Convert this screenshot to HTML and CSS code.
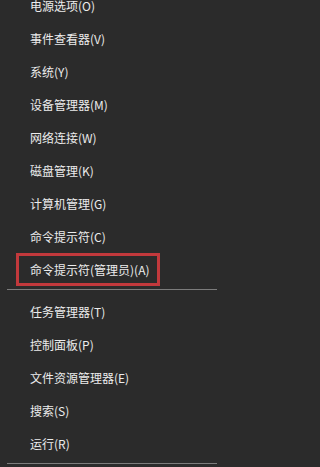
FILE: index.html
```html
<!DOCTYPE html>
<html lang="zh-CN">
<head>
<meta charset="utf-8">
<title>Menu</title>
<link rel="stylesheet" href="styles.css">
</head>
<body>
<ul class="menu">
  <li class="item">电源选项(O)</li>
  <li class="item">事件查看器(V)</li>
  <li class="item">系统(Y)</li>
  <li class="item">设备管理器(M)</li>
  <li class="item">网络连接(W)</li>
  <li class="item">磁盘管理(K)</li>
  <li class="item">计算机管理(G)</li>
  <li class="item">命令提示符(C)</li>
  <li class="item"><span class="marked">命令提示符(管理员)(A)</span></li>
  <li class="sep"></li>
  <li class="item">任务管理器(T)</li>
  <li class="item">控制面板(P)</li>
  <li class="item">文件资源管理器(E)</li>
  <li class="item">搜索(S)</li>
  <li class="item">运行(R)</li>
  <li class="sep"></li>
</ul>
</body>
</html>
```
FILE: styles.css
```css
html, body {
  margin: 0;
  padding: 0;
  background: #2b2b2b;
  height: 100%;
  overflow: hidden;
}
.menu {
  list-style: none;
  width: 225px;
  margin: -11.5px 0 0 0;
  padding: 0;
  font-family: "Noto Sans CJK SC", "Noto Sans", sans-serif;
  font-size: 12px;
  color: #ececec;
}
.item {
  height: 33px;
  line-height: 33px;
  padding-left: 30px;
  white-space: nowrap;
}
.marked {
  display: inline-block;
  box-sizing: border-box;
  height: 33px;
  line-height: 27px;
  width: 144px;
  margin-left: -14px;
  padding-left: 11px;
  border: 3px solid #c2393c;
  vertical-align: top;
}
.sep {
  width: 210px;
  height: 1px;
  background: #7c7c7c;
  margin: 3.5px 0 4.5px 7px;
}
```
